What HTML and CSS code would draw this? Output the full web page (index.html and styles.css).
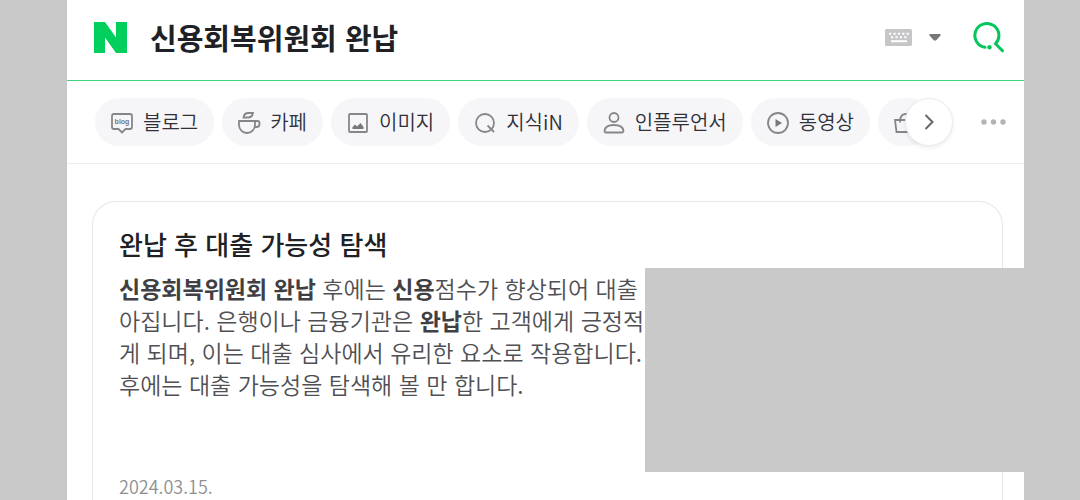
FILE: index.html
```html
<!DOCTYPE html>
<html lang="ko">
<head>
  <meta charset="UTF-8" />
  <meta name="viewport" content="width=device-width, initial-scale=1.0">
  <title>신용회복위원회 완납</title>
  <link rel="stylesheet" href="styles.css">
</head>
<body>
  <div class="page">
    <header>
      <form class="search">
        <a href="#" class="logo" aria-label="N">
          <svg width="33" height="31" viewBox="0 0 33 31"><path d="M0 0h11l11 15.500V0h11v31H22L11 15.500V31H0z" fill="#03cf5d"/></svg>
        </a>
        <input type="text" class="search-input" aria-label="검색어" value="신용회복위원회 완납">
        <button type="button" class="key-btn" aria-label="키보드">
          <svg width="27" height="17" viewBox="0 0 27 17">
            <rect width="27" height="17" rx="1.5" fill="#c6c6c8"/>
            <path d="M4 4.700h20M6 8.200h16" stroke="#fff" stroke-width="2" stroke-dasharray="2.200 2.200"/>
            <path d="M6 12.200h16" stroke="#fff" stroke-width="2"/>
          </svg>
        </button>
        <button type="button" class="arrow-btn" aria-label="자동완성">
          <svg width="12" height="7" viewBox="0 0 12 7"><path d="M.5 0h11v1.500L7 6.500H5L.5 1.500z" fill="#777"/></svg>
        </button>
        <button type="submit" class="search-btn" aria-label="검색">
          <svg width="32" height="32" viewBox="0 0 32 32" fill="none" stroke="#03c75a" stroke-width="3" stroke-linecap="round">
            <path d="M12 26.300A12 12 0 1 1 22.500 22.800L29.500 29.800"/>
            <circle cx="16.500" cy="26.300" r="2.200" fill="#03c75a" stroke="none"/>
          </svg>
        </button>
      </form>
    </header>

    <nav>
      <div class="tabs">
        <a href="#" class="tab">
          <svg class="icon" viewBox="0 0 24 24">
            <path d="M4 4h16q2 0 2 2v11q0 2-2 2h-4.500L12 22.500 8.500 19H4q-2 0-2-2V6Q2 4 4 4z"/>
            <text x="12" y="14" class="blog-text">blog</text>
          </svg>
          블로그
        </a>
        <a href="#" class="tab">
          <svg class="icon" viewBox="0 0 24 24">
            <path d="M2 11h16v4a8 8 0 0 1-16 0zM18 11h2.500q2 0 2 2v1q0 3-3 3h-2M6.500 7.500Q7 3 11.500 3H16q-1 4.500-5 4.500z"/>
          </svg>
          카페
        </a>
        <a href="#" class="tab">
          <svg class="icon" viewBox="0 0 24 24">
            <rect x="3" y="4" width="18" height="18" rx="1"/>
            <path d="M6.500 19v-2l2.500-2.500 2 2 3.500-3.500 3 4v2z" class="solid"/>
          </svg>
          이미지
        </a>
        <a href="#" class="tab">
          <svg class="icon" viewBox="0 0 24 24">
            <circle cx="12" cy="13" r="9"/>
            <path d="M14.500 15.500l6.500 6.500"/>
          </svg>
          지식iN
        </a>
        <a href="#" class="tab">
          <svg class="icon" viewBox="0 0 24 24">
            <circle cx="12" cy="7.500" r="4.500"/>
            <path d="M2.500 21q.5-6 9.500-6t9.500 6q0 1.500-1.500 1.500H4q-1.500 0-1.500-1.500z"/>
          </svg>
          인플루언서
        </a>
        <a href="#" class="tab">
          <svg class="icon" viewBox="0 0 24 24">
            <circle cx="12" cy="13" r="10"/>
            <path d="M9.500 9l6.500 4-6.500 4z" class="solid"/>
          </svg>
          동영상
        </a>
        <a href="#" class="tab" aria-label="쇼핑">
          <svg class="icon" viewBox="0 0 24 24">
            <path d="M2 10h20L21 22H3.500zM7 12.500V10q1-6 5.500-6T18 10v2.500"/>
          </svg>
        </a>
        <button type="button" class="next-btn" aria-label="다음">
          <svg width="10" height="16" viewBox="0 0 10 16" fill="none" stroke="#666" stroke-width="2"><path d="M1.500 1l7 7-7 7"/></svg>
        </button>
      </div>
      <button type="button" class="more-btn" aria-label="더보기">
        <svg width="25" height="6" viewBox="0 0 25 6" fill="#b4b4b4"><circle cx="3" cy="3" r="2.700"/><circle cx="12.500" cy="3" r="2.700"/><circle cx="22" cy="3" r="2.700"/></svg>
      </button>
    </nav>

    <main class="card">
      <h2>완납 후 대출 가능성 탐색</h2>
      <p class="desc">
        <b>신용회복위원회 완납</b> 후에는 <b>신용</b>점수가 향상되어 대출<br>
        아집니다. 은행이나 금융기관은 <b>완납</b>한 고객에게 긍정적<br>
        게 되며, 이는 대출 심사에서 유리한 요소로 작용합니다.<br>
        후에는 대출 가능성을 탐색해 볼 만 합니다.
      </p>
      <time datetime="2024-03-15">2024.03.15.</time>
    </main>
  </div>

  <div class="cover"></div>
</body>
</html>
```
FILE: styles.css
```css
* {
  box-sizing: border-box;
}
body {
  margin: 0;
  padding: 0 56px 0 67px;
  font-family: "Noto Sans CJK KR", sans-serif;
  background: #c9c9c9;
  color: #202124;
  height: 100vh;
  overflow: hidden;
  position: relative;
}
.page {
  display: flex;
  flex-direction: column;
  min-height: 100%;
  background: #fff;
}
button {
  padding: 0;
  border: none;
  background: none;
  cursor: pointer;
}
svg {
  display: block;
}

/* 검색창 */
header {
  border-bottom: 1px solid #3fd47f;
}
.search {
  display: flex;
  align-items: center;
  height: 80px;
  padding: 0 19px 6px 27px;
}
.search-input {
  flex: 1;
  min-width: 0;
  margin-left: 23px;
  padding: 0;
  border: none;
  outline: none;
  font-family: inherit;
  font-size: 29px;
  font-weight: 700;
  line-height: 44px;
  color: #202124;
}
.arrow-btn {
  margin: 0 32px 0 17px;
}

/* 탭 */
nav {
  display: flex;
  align-items: center;
  justify-content: space-between;
  height: 83px;
  padding: 0 18px 0 28px;
  border-bottom: 1px solid #eee;
}
.tabs {
  position: relative;
  display: flex;
  gap: 8px;
  flex: 1;
  min-width: 0;
  margin-right: 28px;
  padding-right: 24px;
  height: 48px;
}
.tab {
  display: flex;
  flex-shrink: 0;
  align-items: center;
  gap: 9px;
  height: 48px;
  padding: 0 16px 0 15px;
  border-radius: 24px;
  background: #f6f6f9;
  color: #303038;
  font-size: 20px;
  font-weight: 350;
  line-height: 28px;
  text-decoration: none;
}
.icon {
  width: 24px;
  height: 24px;
  fill: none;
  stroke: #85868a;
  stroke-width: 1.800;
}
.icon .solid {
  fill: #77787c;
  stroke: none;
}
.blog-text {
  font-family: "Liberation Sans", sans-serif;
  font-size: 7px;
  font-weight: 700;
  text-anchor: middle;
  fill: #77787c;
  stroke: none;
}
.next-btn {
  position: absolute;
  top: 0;
  right: 0;
  display: flex;
  align-items: center;
  justify-content: center;
  width: 48px;
  height: 48px;
  border: 1px solid #ececee;
  border-radius: 50%;
  background: #fff;
  box-shadow: 0 2px 4px rgba(0, 0, 0, 0.08);
}

/* 검색 결과 */
.card {
  flex: 1;
  margin: 37px 21px 0 25px;
  padding: 22px 26px 0;
  border: 1px solid #e6e6e8;
  border-bottom: none;
  border-radius: 24px 24px 0 0;
}
.card h2 {
  margin: 0 0 8px;
  font-size: 26px;
  font-weight: 500;
  line-height: 40px;
}
.desc {
  min-height: 202px;
  margin: 0;
  font-size: 23px;
  font-weight: 350;
  line-height: 32px;
  color: #505054;
  white-space: nowrap;
}
.desc b {
  font-weight: 700;
  color: #404044;
}
time {
  display: block;
  font-size: 18px;
  font-weight: 350;
  line-height: 24px;
  color: #8f8f92;
}
.cover {
  position: absolute;
  top: 268px;
  right: 0;
  width: 435px;
  height: 204px;
  background: #c9c9c9;
}
```
